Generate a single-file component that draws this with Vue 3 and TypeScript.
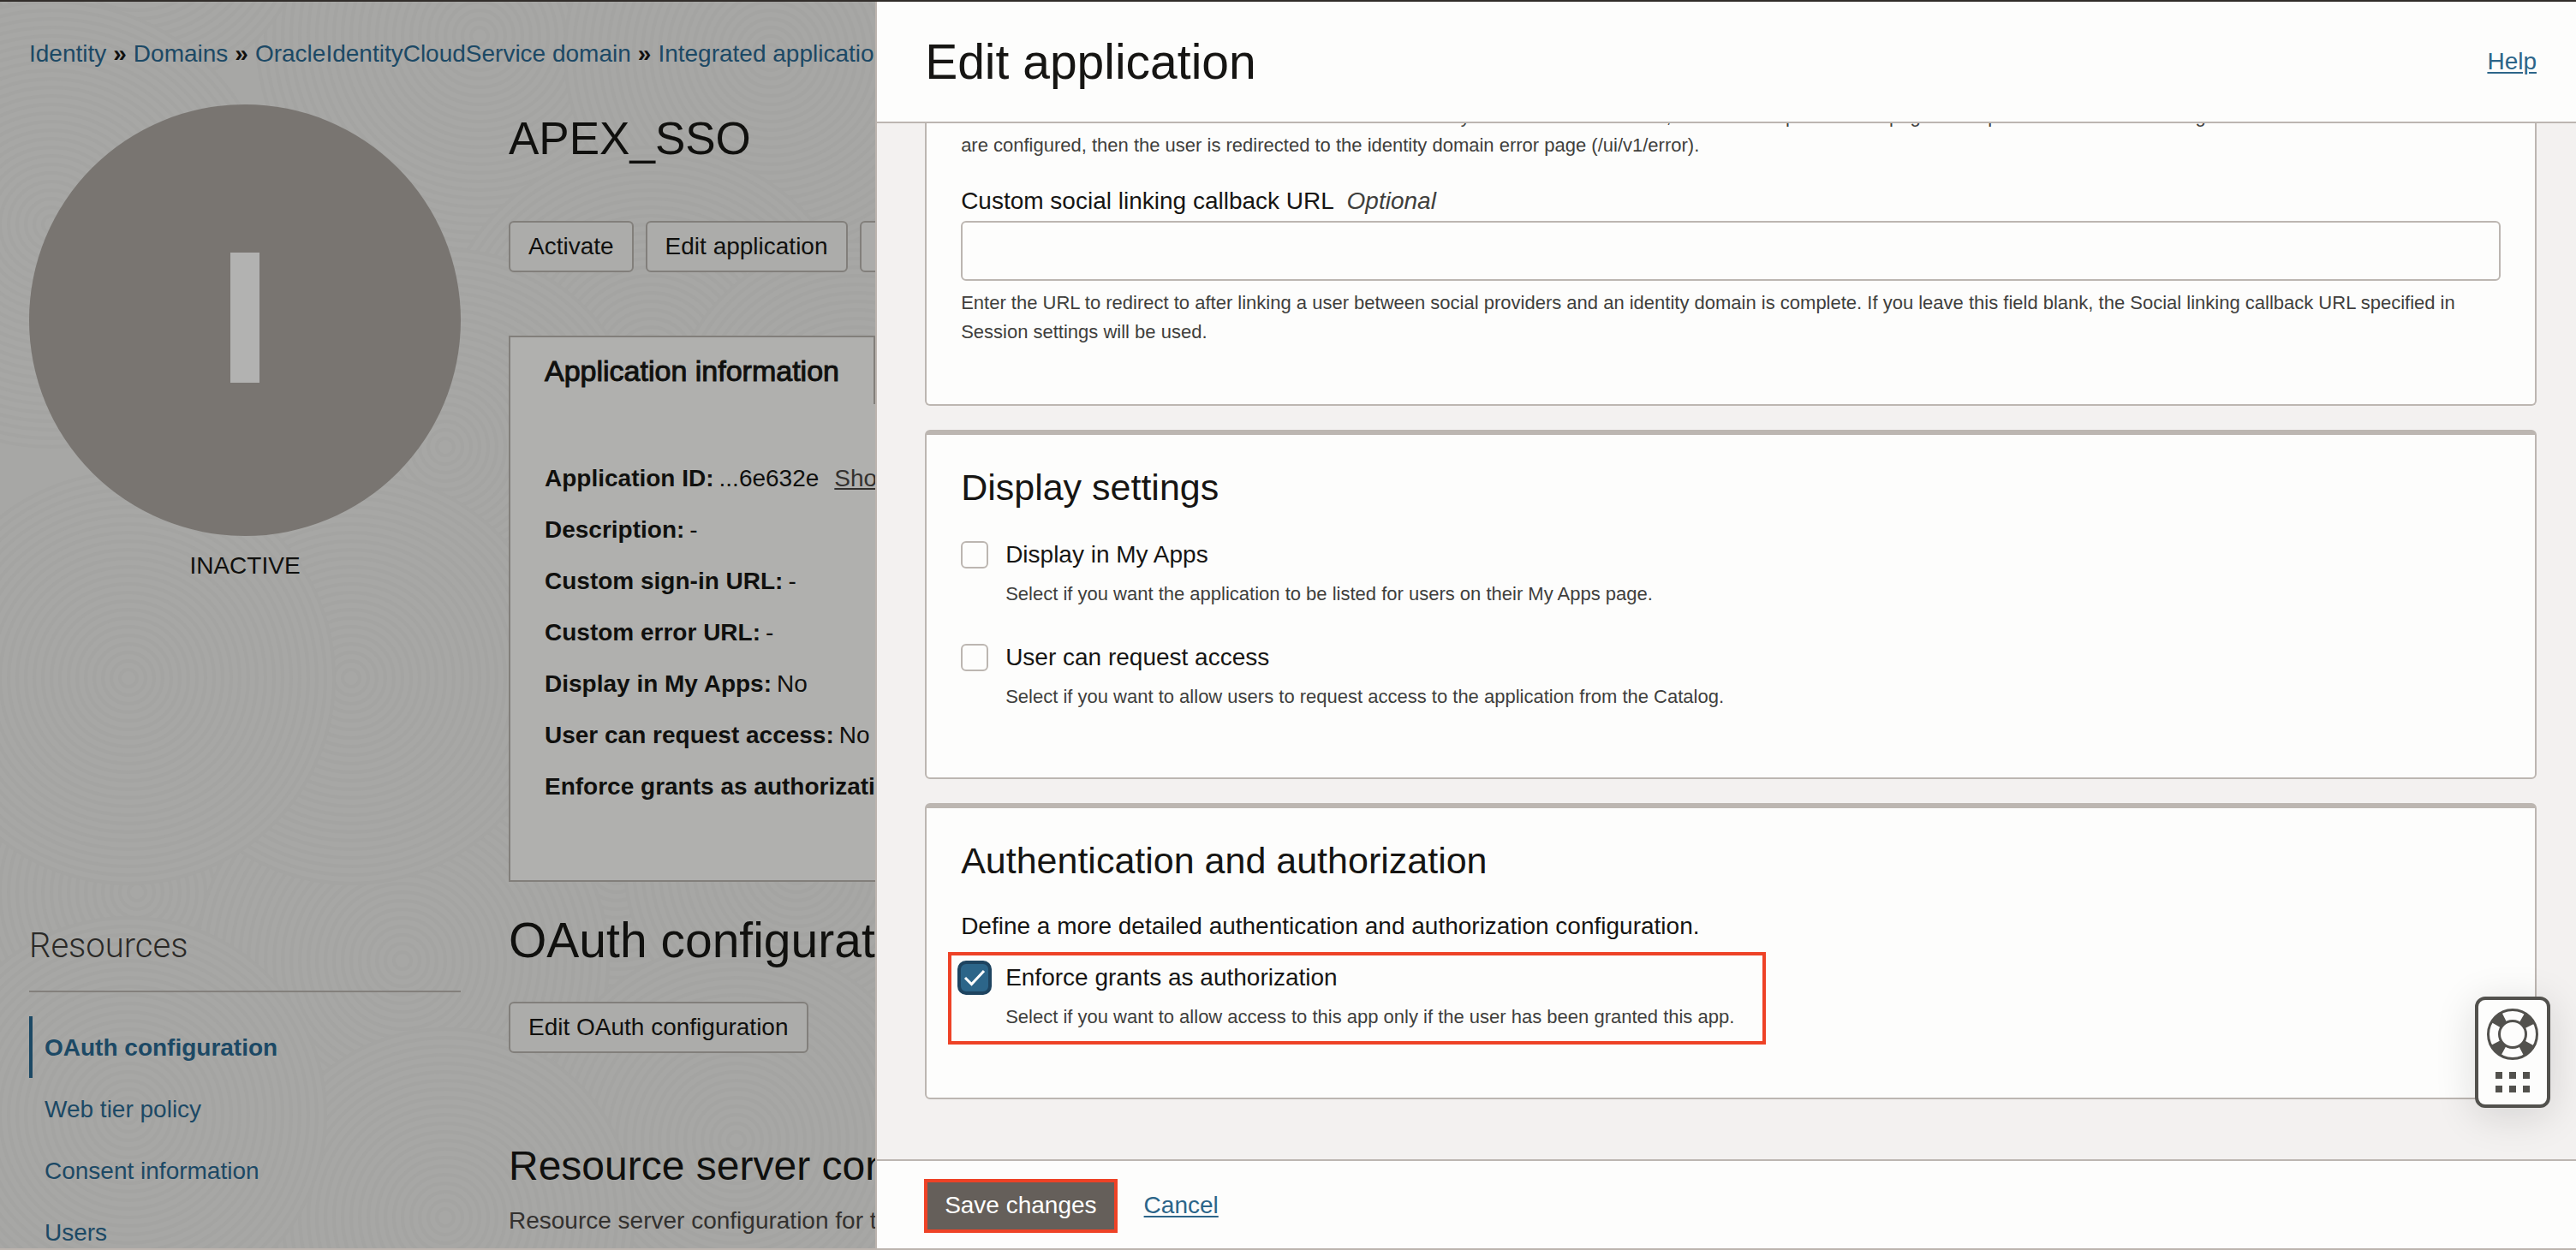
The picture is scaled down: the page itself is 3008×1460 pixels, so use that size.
<script setup lang="ts">
import { ref } from 'vue'

interface Ring { x: number; y: number; r: number }

const crumbs: string[] = ['Identity', 'Domains', 'OracleIdentityCloudService domain', 'Integrated applications']
const navItems: string[] = ['OAuth configuration', 'Web tier policy', 'Consent information', 'Users']
const details: [string, string][] = [
  ['Application ID:', '...6e632e'],
  ['Description:', '-'],
  ['Custom sign-in URL:', '-'],
  ['Custom error URL:', '-'],
  ['Display in My Apps:', 'No'],
  ['User can request access:', 'No'],
  ['Enforce grants as authorization:', 'Yes'],
]

// Overlapping discs of concentric rings for the page's backdrop
const discs: Ring[] = [
  { x: 560, y: 40, r: 260 }, { x: 160, y: -100, r: 200 }, { x: 900, y: 60, r: 240 },
  { x: 60, y: 260, r: 260 }, { x: 760, y: 420, r: 250 }, { x: 1000, y: 500, r: 220 },
  { x: 520, y: 520, r: 230 }, { x: 160, y: 1040, r: 230 }, { x: 720, y: 1010, r: 220 },
  { x: 930, y: 1010, r: 200 }, { x: 470, y: 1120, r: 240 }, { x: 410, y: 790, r: 240 },
  { x: 150, y: 790, r: 240 }, { x: 860, y: 1330, r: 230 }, { x: 520, y: 1420, r: 220 },
  { x: 150, y: 1300, r: 230 },
]
const ringRadii = (r: number): number[] => Array.from({ length: Math.floor(r / 10) }, (_, i) => (i + 1) * 10)

const callbackUrl = ref('')
const showInMyApps = ref(false)
const canRequest = ref(false)
const enforceGrants = ref(true)
</script>

<template>
  <div class="shell">
    <main class="page">
      <svg class="backdrop" aria-hidden="true" width="1100" height="1500">
        <g v-for="(d, i) in discs" :key="i">
          <circle :cx="d.x" :cy="d.y" :r="d.r" fill="#a7a7a5" />
          <circle v-for="r in ringRadii(d.r)" :key="r" :cx="d.x" :cy="d.y" :r="r" fill="none" stroke="#a4a4a2" stroke-width="4" />
        </g>
      </svg>
      <nav class="crumbs" aria-label="Breadcrumb">
        <template v-for="(c, i) in crumbs" :key="c">
          <span v-if="i" class="sep">»</span><a href="#">{{ c }}</a>
        </template>
      </nav>
      <div class="columns">
        <aside class="side">
          <div class="avatar"><span class="initial"></span></div>
          <p class="status">INACTIVE</p>
          <h2 class="side-title">Resources</h2>
          <ul class="nav">
            <li v-for="(n, i) in navItems" :key="n" :class="{ current: i === 0 }"><a href="#">{{ n }}</a></li>
          </ul>
        </aside>
        <section class="body">
          <h1 class="title name">APEX_SSO</h1>
          <div class="actions">
            <button type="button" class="btn">Activate</button>
            <button type="button" class="btn">Edit application</button>
            <button type="button" class="btn">Add</button>
          </div>
          <div class="panel">
            <button type="button" class="tab">Application information</button>
            <dl class="details">
              <div v-for="([k, v], i) in details" :key="k">
                <dt>{{ k }}</dt>
                <dd>{{ v }}</dd>
                <a v-if="i === 0" href="#" class="show">Show</a>
              </div>
            </dl>
          </div>
          <h1 class="title oauth">OAuth configuration</h1>
          <button type="button" class="btn">Edit OAuth configuration</button>
          <h2 class="subtitle">Resource server configuration</h2>
          <p class="desc">Resource server configuration for this application</p>
        </section>
      </div>
    </main>

    <section class="drawer" role="dialog" aria-labelledby="drawer-title">
      <header class="drawer-head">
        <h1 id="drawer-title">Edit application</h1>
        <a href="#" class="link">Help</a>
      </header>
      <div class="scroll">
        <div class="card first">
          <p class="hint cut">Enter the URL to redirect a user to in the case of an error. If you leave this field blank, the domain-specific error page URL specified in Session settings will be used. If none<br>are configured, then the user is redirected to the identity domain error page (/ui/v1/error).</p>
          <label class="field-label" for="callback">Custom social linking callback URL <em>Optional</em></label>
          <input id="callback" v-model="callbackUrl" class="text-input" type="text">
          <p class="hint">Enter the URL to redirect to after linking a user between social providers and an identity domain is complete. If you leave this field blank, the Social linking callback URL specified in<br>Session settings will be used.</p>
        </div>

        <div class="card display">
          <h2>Display settings</h2>
          <div class="option">
            <input id="my-apps" v-model="showInMyApps" type="checkbox">
            <label for="my-apps">Display in My Apps</label>
            <p class="hint">Select if you want the application to be listed for users on their My Apps page.</p>
          </div>
          <div class="option">
            <input id="request" v-model="canRequest" type="checkbox">
            <label for="request">User can request access</label>
            <p class="hint">Select if you want to allow users to request access to the application from the Catalog.</p>
          </div>
        </div>

        <div class="card auth">
          <h2>Authentication and authorization</h2>
          <p class="lead">Define a more detailed authentication and authorization configuration.</p>
          <div class="option marked">
            <input id="enforce" v-model="enforceGrants" type="checkbox">
            <label for="enforce">Enforce grants as authorization</label>
            <p class="hint">Select if you want to allow access to this app only if the user has been granted this app.</p>
          </div>
        </div>
      </div>
      <footer class="drawer-foot">
        <button type="button" class="save">Save changes</button>
        <a href="#" class="link">Cancel</a>
      </footer>
    </section>

    <button type="button" class="support" aria-label="Support">
      <svg width="60" height="60" viewBox="0 0 60 60" fill="none" stroke="#52514d">
        <circle cx="30" cy="30" r="22" stroke-width="13" stroke-dasharray="13 21.56" stroke-dashoffset="-10.78" />
        <circle cx="30" cy="30" r="28.5" stroke-width="3" />
        <circle cx="30" cy="30" r="15.5" stroke-width="3" />
      </svg>
      <svg width="40" height="24" viewBox="0 0 40 24" fill="#52514d">
        <path d="M0 0h8v8H0zM16 0h8v8h-8zM32 0h8v8h-8zM0 16h8v8H0zM16 16h8v8h-8zM32 16h8v8h-8z" />
      </svg>
    </button>
  </div>
</template>

<style>
html, body { margin: 0; height: 100%; overflow: hidden; }
#app { height: 100%; }
</style>

<style scoped>
* { box-sizing: border-box; margin: 0; padding: 0; }
.shell {
  display: flex;
  position: relative;
  height: 100vh;
  overflow: hidden;
  border-top: 2px solid #312d2a;
  border-bottom: 2px solid #bcb4ae;
  font: 28px/40px "Liberation Sans", Arial, sans-serif;
  color: #161513;
}
a { color: #1c4965; text-decoration: none; }
h1, h2 { font-weight: 400; }
ul { list-style: none; }
button { font: inherit; color: inherit; white-space: nowrap; }

.page {
  position: relative;
  flex: 1 1 0;
  min-width: 0;
  padding: 41px 0 0 34px;
  overflow: hidden;
  background: #a7a7a5;
  color: #10100e;
}
.backdrop { position: absolute; top: 0; left: 0; }
.crumbs, .columns { position: relative; white-space: nowrap; }
.crumbs { height: 79px; }
.sep { margin: 0 8px; font-weight: 700; }
.columns { display: flex; gap: 56px; }
.side { flex: 0 0 504px; }
.avatar {
  display: flex;
  align-items: center;
  justify-content: center;
  height: 504px;
  padding-bottom: 6px;
  border-radius: 50%;
  background: #797571;
}
.initial { width: 34px; height: 152px; background: #b2b2b1; }
.status { margin-top: 15px; text-align: center; }
.side-title {
  margin-top: 400px;
  padding-bottom: 28px;
  border-bottom: 2px solid #83807c;
  font-family: Roboto, "Liberation Sans", sans-serif;
  font-size: 40px;
  font-weight: 300;
  line-height: 48px;
  color: #2a2927;
}
.nav { margin-top: 28px; }
.nav li { height: 72px; padding: 17px 0 15px 14px; border-left: 4px solid transparent; }
.nav .current { border-color: #1c4965; font-weight: 700; }
.body { flex: 1 0 0; min-width: 0; }
.title { font-size: 57px; line-height: 64px; }
.name { margin-top: 8px; font-size: 53px; }
.actions { display: flex; gap: 14px; margin-top: 64px; }
.btn {
  height: 60px;
  padding: 0 21px;
  border: 2px solid #827f7b;
  border-radius: 6px;
  background: #acacaa;
}
.panel {
  width: 1200px;
  height: 638px;
  margin-top: 74px;
  border: 2px solid #827f7b;
  background: #b0b0ae;
}
.tab {
  width: 426px;
  height: 78px;
  border: 0;
  border-right: 2px solid #827f7b;
  background: none;
  padding-left: 40px;
  text-align: left;
  font-size: 34px;
  -webkit-text-stroke: 1px #10100e;
}
.details { padding: 67px 0 0 40px; }
.details > div { display: flex; gap: 6px; height: 60px; }
.details dt { font-weight: 700; }
.show { margin-left: 12px; color: #33312f; text-decoration: underline; }
.oauth { margin: 36px 0 40px; }
.subtitle { margin-top: 104px; font-size: 48px; line-height: 56px; }
.desc { margin-top: 16px; color: #33312f; }

.drawer {
  display: flex;
  flex-direction: column;
  flex: 0 0 66.02%;
  min-width: 0;
  border-left: 2px solid #bcb4ae;
  background: #f3f1f0;
}
.drawer-head {
  display: flex;
  align-items: center;
  justify-content: space-between;
  flex: 0 0 142px;
  padding: 0 46px 0 56px;
  border-bottom: 2px solid #bcb6b1;
  background: #fdfdfc;
}
.drawer-head h1 { font-size: 57px; line-height: 64px; }
.link { color: #2c6589; text-decoration: underline; text-underline-offset: 3px; text-decoration-thickness: 2px; }
.scroll {
  display: flex;
  flex-direction: column;
  gap: 28px;
  flex: 1 1 0;
  min-height: 0;
  padding: 0 46px 0 56px;
  overflow: hidden;
}
.card {
  flex: none;
  padding: 33px 40px 0;
  border: 2px solid #bcb6b1;
  border-top-width: 6px;
  border-radius: 6px;
  background: #fdfdfc;
}
.first { height: 355px; margin-top: -25px; padding-top: 0; border-top: 0; border-radius: 0 0 6px 6px; }
.display { height: 408px; }
.auth { height: 346px; }
.card h2 { font-size: 43px; line-height: 56px; }
.hint { font-size: 22px; line-height: 34px; color: #403f3c; }
.cut { white-space: nowrap; }
.field-label { display: block; margin-top: 28px; }
.field-label em { margin-left: 8px; color: #403f3c; }
.text-input {
  display: block;
  width: 100%;
  height: 70px;
  margin: 3px 0 9px;
  padding: 0 20px;
  border: 2px solid #bcb6b1;
  border-radius: 6px;
  background: #fdfdfc;
  font: inherit;
}
.option {
  display: grid;
  grid-template-columns: 32px 1fr;
  column-gap: 20px;
  height: 120px;
  align-content: start;
  row-gap: 9px;
}
.card h2 + .option { margin-top: 31px; }
.option .hint { grid-column: 2; }
.option input {
  appearance: none;
  width: 32px;
  height: 32px;
  margin-top: 4px;
  border: 2px solid #bcb6b1;
  border-radius: 6px;
  background: #fdfdfc;
}
.option input:checked {
  width: 40px;
  height: 40px;
  margin: 0 -4px;
  border: 4px solid #1e4460;
  border-radius: 10px;
  background: #2c6589 url("data:image/svg+xml,%3Csvg xmlns='http://www.w3.org/2000/svg' viewBox='0 0 32 32'%3E%3Cpath d='M5 16l7.500 7.500L27 8' fill='none' stroke='white' stroke-width='3'/%3E%3C/svg%3E") center / 32px 32px;
}
.lead { margin-top: 29px; }
.marked {
  width: 955px;
  height: 108px;
  margin: 10px 0 0 -15px;
  padding: 6px 11px;
  border: 4px solid #ee4226;
}
.drawer-foot {
  display: flex;
  align-items: center;
  gap: 31px;
  flex: 0 0 104px;
  padding: 2px 55px 0;
  border-top: 2px solid #bcb6b1;
  background: #fdfdfc;
}
.save {
  height: 63px;
  padding: 0 20px;
  border: 4px solid #ee4226;
  background: #655f5a;
  color: #fff;
}
.support {
  position: absolute;
  right: 30px;
  bottom: 164px;
  display: flex;
  flex-direction: column;
  align-items: center;
  gap: 14px;
  width: 88px;
  height: 130px;
  padding-top: 10px;
  border: 4px solid #52514d;
  border-radius: 12px;
  background: #fdfdfc;
  box-shadow: 0 8px 48px rgba(22, 21, 19, 0.14);
}
</style>
